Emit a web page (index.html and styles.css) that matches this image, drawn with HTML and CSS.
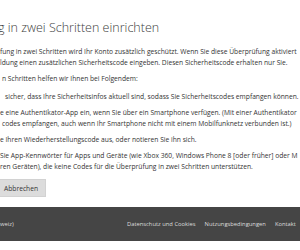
FILE: index.html
```html
<!DOCTYPE html>
<html lang="de">
<head>
    <meta charset="UTF-8">
    <meta name="viewport" content="width=device-width, initial-scale=1.0">
    <title>Überprüfung in zwei Schritten einrichten</title>
    <link rel="stylesheet" href="styles.css">
</head>
<body>
    <main class="content">
        <h1 class="title">g in zwei Schritten einrichten</h1>

        <p class="intro">
            fung in zwei Schritten wird Ihr Konto zusätzlich geschützt. Wenn Sie diese Überprüfung aktiviert<br>
            ldung einen zusätzlichen Sicherheitscode eingeben. Diesen Sicherheitscode erhalten nur Sie.
        </p>

        <p class="lead">n Schritten helfen wir Ihnen bei Folgendem:</p>

        <ul class="steps">
            <li class="step-first">sicher, dass Ihre Sicherheitsinfos aktuell sind, sodass Sie Sicherheitscodes empfangen können.</li>
            <li>e eine Authentikator-App ein, wenn Sie über ein Smartphone verfügen. (Mit einer Authentikator<br>
                <span class="wrap">codes empfangen, auch wenn Ihr Smartphone nicht mit einem Mobilfunknetz verbunden ist.)</span></li>
            <li>e Ihren Wiederherstellungscode aus, oder notieren Sie ihn sich.</li>
            <li>Sie App-Kennwörter für Apps und Geräte (wie Xbox 360, Windows Phone 8 [oder früher] oder M<br>
                ren Geräten), die keine Codes für die Überprüfung in zwei Schritten unterstützen.</li>
        </ul>

        <div class="actions">
            <button class="cancel-button">Abbrechen</button>
        </div>
    </main>

    <footer class="site-footer">
        <span class="locale">weiz)</span>
        <nav class="footer-links">
            <a href="#">Datenschutz und Cookies</a>
            <a href="#">Nutzungsbedingungen</a>
            <a href="#">Kontakt</a>
        </nav>
    </footer>
</body>
</html>
```

FILE: styles.css
```css
html,
body {
    margin: 0;
    padding: 0;
    width: 300px;
    height: 250px;
    overflow: hidden;
    background-color: #ffffff;
    font-family: "Open Sans", "Noto Sans", sans-serif;
    color: #333333;
}

.content {
    box-sizing: border-box;
    height: 207px;
    padding-top: 19px;
    white-space: nowrap;
}

.title {
    margin: 0 0 9px -2px;
    font-size: 12.5px;
    font-weight: 300;
    line-height: 18px;
    color: #3c3c3c;
}

.intro,
.lead {
    margin: 0;
    font-size: 6.7px;
    line-height: 11px;
}

.lead {
    margin-top: 5px;
    padding-left: 2px;
}

.steps {
    list-style: none;
    margin: 7px 0 0 0;
    padding: 0;
    font-size: 6.7px;
    line-height: 11px;
}

.steps li {
    margin-bottom: 5px;
}

.steps li:last-child {
    margin-bottom: 0;
}

.steps .step-first {
    padding-left: 5px;
}

.wrap {
    padding-left: 2px;
}

.actions {
    display: flex;
    margin-top: 7px;
}

.cancel-button {
    height: 18px;
    margin-left: -2px;
    padding: 0 7px 0 5px;
    font-family: inherit;
    font-size: 6.7px;
    color: #333333;
    background-color: #dcdcdc;
    border: 1px solid #d2d2d2;
    border-radius: 0;
}

.site-footer {
    display: flex;
    align-items: center;
    height: 34px;
    background-color: #454545;
    white-space: nowrap;
    font-size: 5.8px;
}

.locale {
    flex: 0 0 127px;
    color: #dddddd;
}

.footer-links {
    display: flex;
    gap: 9px;
}

.footer-links a {
    color: #dddddd;
    text-decoration: none;
}
```
